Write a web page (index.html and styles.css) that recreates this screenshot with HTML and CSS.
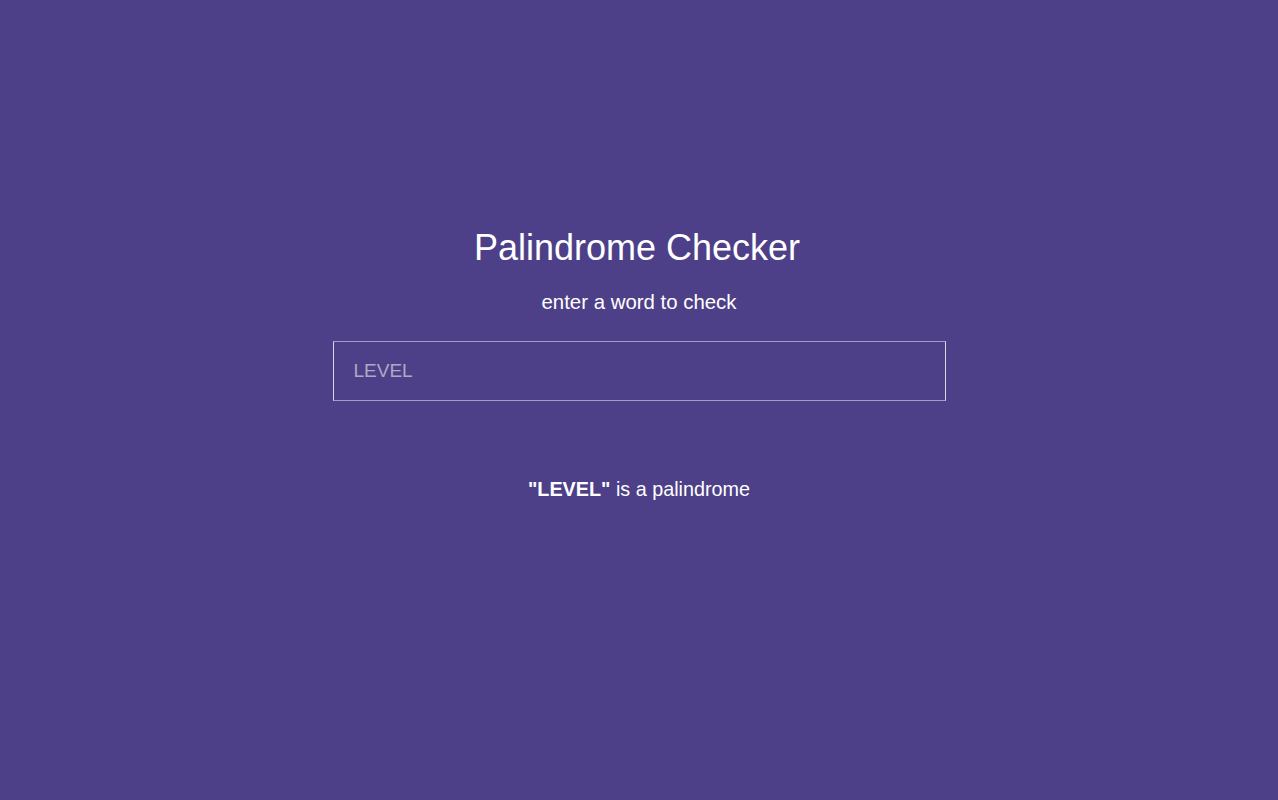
FILE: index.html
```html
<!DOCTYPE html>
<html>
<head>
<meta charset="utf-8">
<link rel="stylesheet" href="styles.css">
</head>
<body>
<main class="app">
  <h1 class="title">Palindrome Checker</h1>
  <p class="subtitle">enter a word to check</p>
  <input class="word-input" type="text" placeholder="LEVEL">
  <p class="result"><strong>"LEVEL"</strong> is a palindrome</p>
</main>
</body>
</html>
```
FILE: styles.css
```css
html, body {
  margin: 0;
  padding: 0;
  height: 100%;
}
body {
  background: #4d4088;
  font-family: "Liberation Sans", Arial, sans-serif;
  color: #ffffff;
}
.app {
  display: flex;
  flex-direction: column;
  align-items: center;
  padding-top: 226px;
}
.title {
  margin: 0 4px 0 0;
  font-size: 36px;
  font-weight: 400;
  line-height: 44px;
}
.subtitle {
  margin: 20px 0 0;
  font-size: 20.4px;
  line-height: 24px;
}
.word-input {
  margin-top: 27px;
  box-sizing: border-box;
  width: 613px;
  height: 60px;
  padding: 0 20px;
  background: transparent;
  border: 1px solid #a29cc4;
  border-left-color: #d8d5e6;
  border-right-color: #d8d5e6;
  color: #ffffff;
  font-family: "Liberation Sans", Arial, sans-serif;
  font-size: 19px;
  outline: none;
}
.word-input::placeholder {
  color: #aeaac4;
}
.result {
  margin: 76px 0 0;
  font-size: 19.8px;
  line-height: 24px;
}
.result strong {
  font-weight: 700;
}
```
